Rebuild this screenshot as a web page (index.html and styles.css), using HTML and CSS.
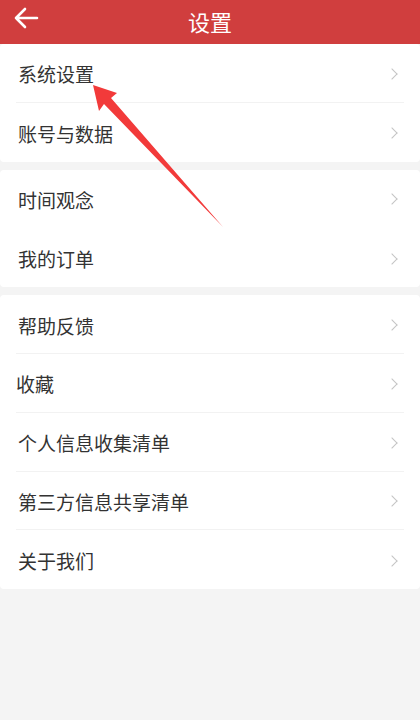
FILE: index.html
```html
<!DOCTYPE html>
<html lang="zh-CN">
<head>
  <meta charset="UTF-8" />
  <meta name="viewport" content="width=device-width, initial-scale=1.0"/>
  <title>设置</title>
  <link rel="stylesheet" href="styles.css">
</head>
<body>
  <div class="header">
    <a href="#" class="back">
      <svg width="26" height="24" viewBox="0 0 26 24"><path d="M24 12H3M12 3L3 12l9 9" fill="none" stroke="#fff" stroke-width="2.6" stroke-linecap="round" stroke-linejoin="round"/></svg>
    </a>
    <h1>设置</h1>
  </div>

  <div class="group">
    <div class="row"><span>系统设置</span><i class="chev"></i></div>
    <div class="row"><span>账号与数据</span><i class="chev"></i></div>
  </div>

  <div class="group">
    <div class="row no-line"><span>时间观念</span><i class="chev"></i></div>
    <div class="row"><span>我的订单</span><i class="chev"></i></div>
  </div>

  <div class="group">
    <div class="row"><span>帮助反馈</span><i class="chev"></i></div>
    <div class="row tight"><span>收藏</span><i class="chev"></i></div>
    <div class="row"><span>个人信息收集清单</span><i class="chev"></i></div>
    <div class="row"><span>第三方信息共享清单</span><i class="chev"></i></div>
    <div class="row"><span>关于我们</span><i class="chev"></i></div>
  </div>

  <!-- annotation arrow drawn over the list -->
  <svg class="pointer" width="420" height="720" viewBox="0 0 420 720">
    <polygon points="93,85 117,93 111,98 223,227 104,104 99,111" fill="#f23a3a"/>
  </svg>
</body>
</html>
```

FILE: styles.css
```css
body {
  margin: 0;
  padding: 0;
  background: #f4f4f4;
  font-family: "Noto Sans CJK SC", "Noto Sans", sans-serif;
  min-height: 720px;
  position: relative;
}
.header {
  height: 44px;
  background: #d03e3e;
  display: flex;
  align-items: center;
  justify-content: center;
  position: relative;
}
.header h1 {
  margin: 0 0 3px;
  color: #fff;
  font-size: 22px;
  font-weight: normal;
  line-height: 40px;
}
.back {
  position: absolute;
  left: 13px;
  top: 6px;
}
.group {
  background: #fff;
  border-radius: 4px;
  padding: 0 16px;
  margin-bottom: 8px;
}
.row {
  height: 58.8px;
  display: flex;
  align-items: center;
  justify-content: space-between;
  border-bottom: 1px solid #f2f2f2;
  box-sizing: border-box;
  padding-left: 2px;
  padding-top: 2px;
  font-size: 19px;
  color: #333;
}
.row:last-child {
  border-bottom: none;
}
.row.no-line {
  border-bottom-color: #fff;
}
.row.tight {
  padding-left: 0;
}
.chev {
  width: 7px;
  height: 7px;
  border-top: 1.5px solid #c4c4c4;
  border-right: 1.5px solid #c4c4c4;
  transform: rotate(45deg);
  margin-right: 8px;
}
.pointer {
  position: absolute;
  left: 0;
  top: 0;
  pointer-events: none;
}
```
